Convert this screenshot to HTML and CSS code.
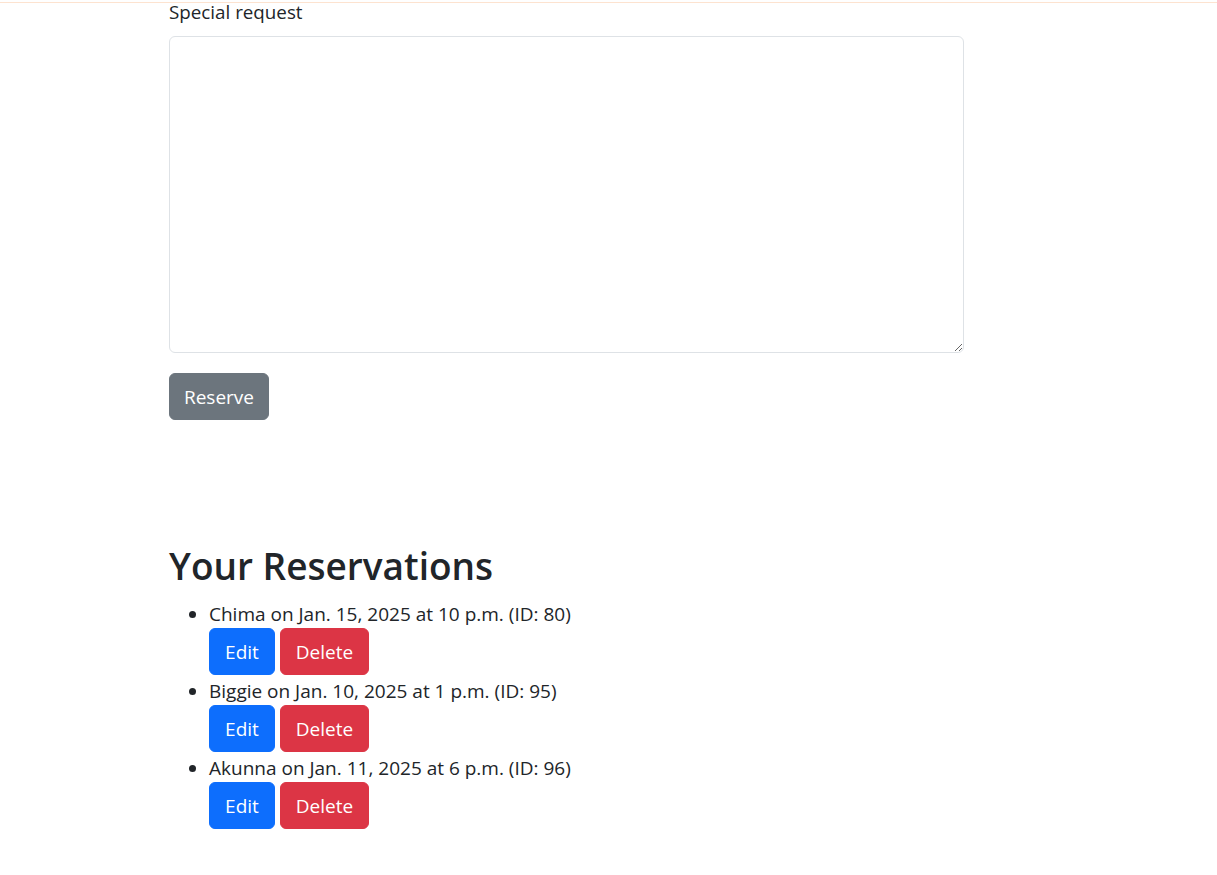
FILE: index.html
```html
<!DOCTYPE html>
<html lang="en">
<head>
<meta charset="utf-8">
<title>Reservations</title>
<link rel="stylesheet" href="styles.css">
</head>
<body>
<div class="topline"></div>
<main class="container">
  <form class="form">
    <label class="label" for="req">Special request</label>
    <textarea id="req" class="textarea"></textarea>
    <div><button type="button" class="btn btn-secondary">Reserve</button></div>
  </form>
  <h1 class="heading">Your Reservations</h1>
  <ul class="list">
    <li class="item">
      <div class="item-text">Chima on Jan. 15, 2025 at 10 p.m. (ID: 80)</div>
      <div class="actions"><button type="button" class="btn btn-primary">Edit</button><button type="button" class="btn btn-danger">Delete</button></div>
    </li>
    <li class="item">
      <div class="item-text">Biggie on Jan. 10, 2025 at 1 p.m. (ID: 95)</div>
      <div class="actions"><button type="button" class="btn btn-primary">Edit</button><button type="button" class="btn btn-danger">Delete</button></div>
    </li>
    <li class="item">
      <div class="item-text">Akunna on Jan. 11, 2025 at 6 p.m. (ID: 96)</div>
      <div class="actions"><button type="button" class="btn btn-primary">Edit</button><button type="button" class="btn btn-danger">Delete</button></div>
    </li>
  </ul>
</main>
</body>
</html>
```

FILE: styles.css
```css
* { box-sizing: border-box; }
html, body { margin: 0; padding: 0; background: #fff; }
body {
  font-family: "Open Sans", "Noto Sans", "Liberation Sans", sans-serif;
  font-size: 19px;
  line-height: 27px;
  color: #212529;
}
.topline {
  position: absolute;
  top: 2px;
  left: 0;
  right: 0;
  height: 1px;
  background: #fde3d0;
}
.container {
  width: 795px;
  margin-left: 169px;
}
.form { display: flex; flex-direction: column; }
.label { display: block; height: 27px; margin-bottom: 9px; line-height: 24px; font-size: 18.8px; }
.textarea {
  display: block;
  width: 795px;
  height: 317px;
  border: 1px solid #dee2e6;
  border-radius: 6px;
  resize: vertical;
  font: inherit;
  margin: 0 0 20px 0;
}
.btn {
  display: inline-block;
  font-family: inherit;
  font-size: 19px;
  line-height: 27px;
  height: 47px;
  padding: 10px 0 8px;
  border: 1px solid transparent;
  border-radius: 6px;
  color: #fff;
  text-align: center;
  cursor: pointer;
}
.btn-secondary { background: #6c757d; border-color: #6c757d; width: 100px; }
.btn-primary { background: #0d6efd; border-color: #0d6efd; width: 66px; }
.btn-danger { background: #dc3545; border-color: #dc3545; width: 89px; }
.heading {
  font-size: 37px;
  font-weight: 600;
  line-height: 48px;
  margin: 122px 0 11px 0;
}
.list {
  margin: 0;
  padding-left: 40px;
}
.item-text { height: 27px; }
.actions { display: flex; gap: 5px; padding-bottom: 3px; }
```
